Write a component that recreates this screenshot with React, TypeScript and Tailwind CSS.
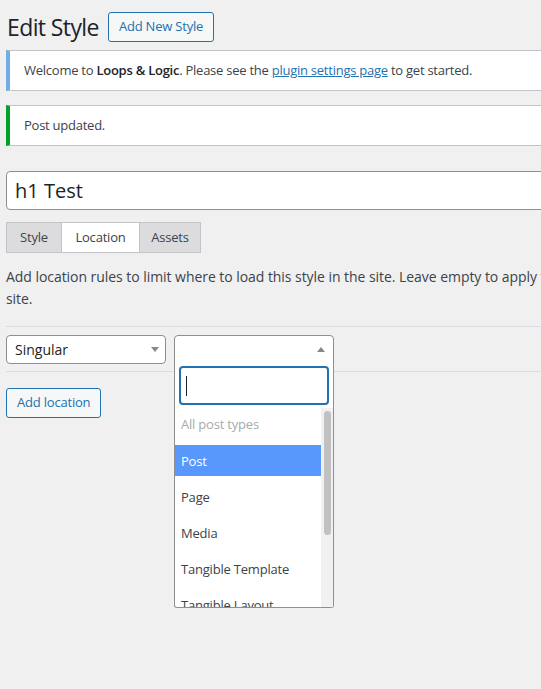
import React from "react";

const font = { fontFamily: '"Open Sans", "Liberation Sans", sans-serif' };

const postTypes = ["Post", "Page", "Media", "Tangible Template", "Tangible Layout"];

function Notice({ accent, children }: { accent: string; children: React.ReactNode }) {
  return (
    <div
      className={`flex h-[41px] items-center border border-[#c3c4c7] border-l-4 bg-white pl-[14px] text-[13px] tracking-[-0.25px] text-[#3c434a] ${accent}`}
    >
      {children}
    </div>
  );
}

function Caret({ up }: { up?: boolean }) {
  return (
    <svg width="8" height="5" viewBox="0 0 8 5" className="shrink-0">
      {up ? <path d="M0 5 L4 0 L8 5 Z" fill="#888" /> : <path d="M0 0 L8 0 L4 5 Z" fill="#888" />}
    </svg>
  );
}

function PostTypeDropdown() {
  return (
    <div className="relative w-[160px]">
      <div className="flex h-[29px] items-center justify-end rounded-t-[4px] border border-[#8c8f94] bg-white pr-[8px]">
        <Caret up />
      </div>
      {/* open select2 panel */}
      <div className="absolute left-0 top-[28px] z-10 w-[160px] rounded-b-[3px] border border-t-0 border-[#8c8f94] bg-white">
        <div className="px-[4px] pt-[3px] pb-[3px]">
          <div className="flex h-[39px] items-center rounded-[4px] border-2 border-[#2271b1] pl-[5px]">
            <span className="h-[20px] w-px bg-[#1d2327]" />
          </div>
        </div>
        <div className="flex h-[199px] overflow-hidden">
          <div className="flex-1 pt-px text-[13px] tracking-[-0.2px]" style={font}>
            <div className="flex h-[36px] items-center px-[6px] pb-[4px] text-[#a7aaad]">All post types</div>
            {postTypes.map((t) =>
              t === "Post" ? (
                <div key={t} className="h-[36px]">
                  <div className="flex h-[31px] items-center bg-[#5897fb] px-[6px] pt-[2px] text-white">{t}</div>
                </div>
              ) : (
                <div key={t} className="flex h-[36px] items-center px-[6px] pb-[3px] text-[#3c434a]">
                  {t}
                </div>
              )
            )}
          </div>
          <div className="w-[12px] bg-[#f1f1f1] pt-[3px]">
            <div className="mx-auto h-[124px] w-[7px] rounded-full bg-[#c1c1c1]" />
          </div>
        </div>
      </div>
    </div>
  );
}

export default function App() {
  return (
    <div className="h-[689px] w-[541px] overflow-hidden bg-[#f0f0f1]" style={font}>
      <div className="w-[640px] pl-[6px] pt-[12px]">
        {/* Header */}
        <div className="flex items-center gap-[9px]">
          <h1 className="pl-px text-[23px] leading-[30px] tracking-[-0.6px] text-[#1d2327]">Edit Style</h1>
          <button className="h-[30px] rounded-[3px] border border-[#2271b1] bg-[#f6f7f7] px-[10px] text-[13px] tracking-[-0.2px] text-[#2271b1]">
            Add New Style
          </button>
        </div>

        {/* Notices */}
        <div className="mt-[8px] flex flex-col gap-[14px]">
          <Notice accent="border-l-[#72aee6]">
            <span>
              Welcome to <strong className="font-semibold text-[#1d2327]">Loops &amp; Logic</strong>. Please see the{" "}
              <a className="text-[#2271b1] underline">plugin settings page</a> to get started.
            </span>
          </Notice>
          <Notice accent="border-l-[#00a32a]">Post updated.</Notice>
        </div>

        {/* Title */}
        <div className="mt-[25px] flex h-[39px] items-center rounded-[4px] border border-[#8c8f94] bg-white pl-[8px] text-[20px] text-[#1d2327]">
          h1 Test
        </div>

        {/* Tabs */}
        <div className="mt-[12px] flex text-[13px] tracking-[-0.2px] text-[#3c434a]">
          <div className="flex h-[31px] w-[56px] items-center justify-center border border-[#c3c4c7] bg-[#dcdcde]">Style</div>
          <div className="flex h-[31px] w-[77px] items-center justify-center border-y border-[#c3c4c7] bg-white">Location</div>
          <div className="flex h-[31px] w-[62px] items-center justify-center border border-[#c3c4c7] bg-[#dcdcde]">Assets</div>
        </div>

        {/* Description */}
        <p className="mt-[13px] text-[14px] leading-[22px] tracking-[-0.05px] text-[#3c434a]">
          Add location rules to limit where to load this style in the site. Leave empty to apply to the whole
          <br />
          site.
        </p>

        <div className="mt-[16px] h-px bg-[#dcdcde]" />

        {/* Location rule */}
        <div className="mt-[8px] flex gap-[8px] text-[14px]">
          <div className="flex h-[29px] w-[160px] items-center justify-between rounded-[4px] border border-[#8c8f94] bg-white pl-[8px] pr-[6px] text-[#1d2327]">
            Singular
            <Caret />
          </div>
          <PostTypeDropdown />
        </div>

        <div className="mt-[7px] h-px bg-[#dcdcde]" />

        <button className="mt-[16px] h-[30px] rounded-[3px] border border-[#2271b1] bg-[#f6f7f7] px-[10px] text-[13px] tracking-[-0.2px] text-[#2271b1]">
          Add location
        </button>
      </div>
    </div>
  );
}
